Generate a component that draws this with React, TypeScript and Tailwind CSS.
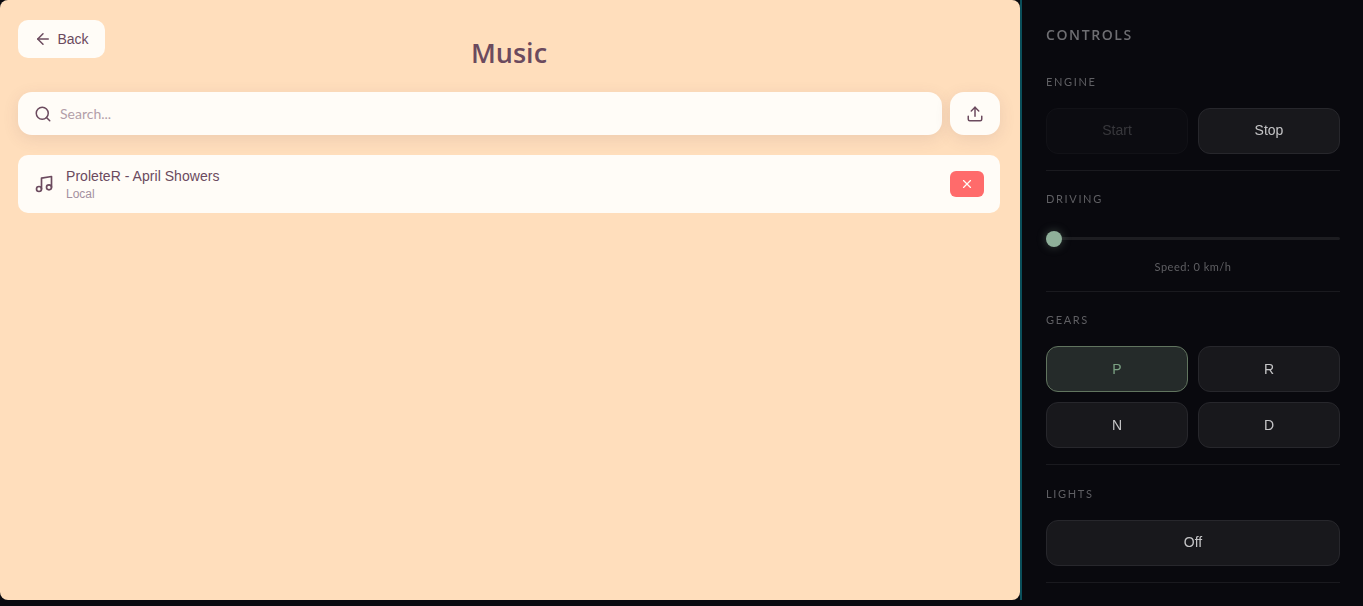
import { ArrowLeft, Music, Search, Upload, X } from "lucide-react";

const sans = "font-['Liberation_Sans',Arial,sans-serif]";
const ui = "font-['Open_Sans',sans-serif]";
const narrow = "font-['Lato',sans-serif]";

function Section({ title, children, className = "" }: { title: string; children: React.ReactNode; className?: string }) {
  return (
    <section className={`border-b border-[#1a1a1f] pb-4 mb-5 ${className}`}>
      <h3 className={`${narrow} text-[11px] leading-[15px] tracking-[1.65px] text-[#5f5f63] mb-[19px]`}>{title}</h3>
      {children}
    </section>
  );
}

function Btn({ children, active, off, className = "" }: { children: React.ReactNode; active?: boolean; off?: boolean; className?: string }) {
  const look = active
    ? "bg-[#252b2a] border-[#61745f] text-[#7ba183]"
    : off
      ? "bg-[#0c0c11] border-[#121217] text-[#38383c]"
      : "bg-[#18181c] border-[#27272c] text-[#c4c4c6]";
  return (
    <button type="button" className={`${sans} h-[46px] rounded-xl border text-sm flex items-center justify-center ${look} ${className}`}>
      {children}
    </button>
  );
}

export default function App() {
  return (
    <div className="h-[606px] w-[1363px] bg-[#0a0a0f] flex items-start overflow-hidden">
      <main className="relative w-[1020px] h-[600px] shrink-0 rounded-lg bg-[#ffdebc] pl-[18px] pr-5 pt-5">
        <div className="h-[72px]">
          <button type="button" className={`${sans} h-[38px] w-[87px] rounded-[10px] bg-[#fffcf7] text-[#6b4a5e] text-sm flex items-center justify-center gap-[5px]`}>
            <ArrowLeft size={18} strokeWidth={2} />
            Back
          </button>
        </div>
        <h1 className={`${ui} absolute left-0 right-[2px] top-[34px] text-center text-[27px] leading-[38px] font-semibold text-[#6b4a5e]`}>Music</h1>
        <div className="flex gap-2">
          <div className="flex-1 h-[43px] rounded-[14px] bg-[#fffcf7] shadow-[0_4px_16px_rgba(107,74,94,0.12)] flex items-center pl-4 gap-2">
            <Search size={18} strokeWidth={2} className="text-[#6b4a5e]" />
            <span className={`${narrow} text-sm text-[#b39fa9]`}>Search...</span>
          </div>
          <button type="button" className="w-[50px] h-[43px] rounded-[14px] bg-[#fffcf7] shadow-[0_4px_16px_rgba(107,74,94,0.12)] flex items-center justify-center text-[#6b4a5e]">
            <Upload size={18} strokeWidth={2} />
          </button>
        </div>
        <div className="mt-5 h-[58px] rounded-[10px] bg-[#fffcf7] flex items-center pl-4 pr-4">
          <Music size={20} strokeWidth={2} className="text-[#6b4a5e]" />
          <div className={`${sans} ml-3 flex-1 pt-[2px]`}>
            <div className="text-sm leading-[17px] tracking-[0.04px] text-[#6b4a5e]">ProleteR - April Showers</div>
            <div className="text-xs leading-[15px] mt-[2px] text-[#a390a0]">Local</div>
          </div>
          <button type="button" className="w-[34px] h-[26px] rounded-md bg-[#ff6b6b] flex items-center justify-center text-[#fffcf7]">
            <X size={14} strokeWidth={2} />
          </button>
        </div>
      </main>
      <aside className="flex-1 h-[600px] border-l-2 border-[#0b4f5a] bg-[#0a0a0f]/95 backdrop-blur-md pl-6 pr-[23px] pt-[25px]">
        <h2 className={`${ui} text-sm leading-[19px] font-semibold tracking-[1.6px] text-[#6e6e72] mb-[30px]`}>CONTROLS</h2>
        <Section title="ENGINE">
          <div className="grid grid-cols-2 gap-[10px]">
            <Btn off className="pb-[2px]">Start</Btn>
            <Btn className="pb-[2px]">Stop</Btn>
          </div>
        </Section>
        <Section title="DRIVING">
          <div className="relative h-4 mt-[25px] flex items-center">
            <div className="w-full h-[3px] mb-[1px] rounded-full bg-[#1d1d21]" />
            <div className="absolute left-0 top-0 w-4 h-4 rounded-full bg-[#8fb09a] shadow-[0_0_10px_rgba(143,176,154,0.35)]" />
          </div>
          <p className={`${narrow} mt-3 mb-[1px] text-center text-[11px] leading-[15px] tracking-[0.5px] text-[#5f5f63]`}>Speed: 0 km/h</p>
        </Section>
        <Section title="GEARS" className="mb-[21px]">
          <div className="grid grid-cols-2 gap-[10px]">
            <Btn active>P</Btn>
            <Btn>R</Btn>
            <Btn>N</Btn>
            <Btn>D</Btn>
          </div>
        </Section>
        <Section title="LIGHTS">
          <div className="grid">
            <Btn className="pb-[2px]">Off</Btn>
          </div>
        </Section>
      </aside>
    </div>
  );
}
